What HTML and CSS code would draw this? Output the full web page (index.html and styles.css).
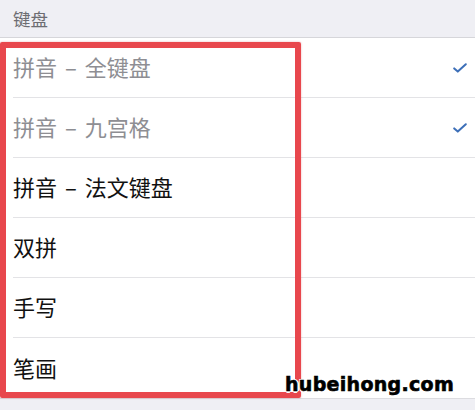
FILE: index.html
```html
<!DOCTYPE html>
<html lang="zh">
<head>
<meta charset="utf-8">
<link rel="stylesheet" href="styles.css">
</head>
<body>
<div class="screen">
  <div class="section-header">键盘</div>
  <ul class="list">
    <li class="row muted"><span class="label">拼音<span class="dash">–</span>全键盘</span>
      <svg class="check" viewBox="0 0 14 10" width="14" height="10"><path d="M1.2 5.4 L4.8 8.6 L12.8 1.2" fill="none" stroke="#3d6fb8" stroke-width="2" stroke-linecap="round" stroke-linejoin="round"/></svg>
    </li>
    <li class="row muted"><span class="label">拼音<span class="dash">–</span>九宫格</span>
      <svg class="check" viewBox="0 0 14 10" width="14" height="10"><path d="M1.2 5.4 L4.8 8.6 L12.8 1.2" fill="none" stroke="#3d6fb8" stroke-width="2" stroke-linecap="round" stroke-linejoin="round"/></svg>
    </li>
    <li class="row"><span class="label">拼音<span class="dash">–</span>法文键盘</span></li>
    <li class="row"><span class="label">双拼</span></li>
    <li class="row"><span class="label">手写</span></li>
    <li class="row last"><span class="label">笔画</span></li>
  </ul>
  <div class="footer"></div>
  <div class="highlight"></div>
  <div class="watermark">hubeihong.com</div>
</div>
</body>
</html>
```
FILE: styles.css
```css
* { box-sizing: border-box; }
html, body { margin: 0; padding: 0; background: #efeff4; }
.screen {
  position: relative;
  width: 475px;
  height: 410px;
  overflow: hidden;
  font-family: "Noto Sans CJK SC", "Noto Sans", sans-serif;
}
.section-header {
  height: 38px;
  padding-left: 13px;
  padding-bottom: 1px;
  display: flex;
  align-items: center;
  font-size: 17.5px;
  color: #6d6d72;
  background: #efeff4;
  border-bottom: 1px solid #d6d6da;
}
.list {
  list-style: none;
  margin: 0;
  padding: 0 0 0 13px;
  background: #fff;
}
.row {
  height: 60px;
  display: flex;
  align-items: center;
  justify-content: space-between;
  padding-right: 8px;
  padding-bottom: 3px;
  border-bottom: 1px solid #e3e3e6;
  font-size: 22px;
  color: #111;
}
.row.last { border-bottom: none; }
.row.muted { color: #8e8e93; }
.label { line-height: 1; }
.dash { margin: 0 8px; }
.check { display: block; margin-top: 3px; }
.footer {
  height: 13px;
  background: #efeff4;
  border-top: 1px solid #dcdce0;
}
.highlight {
  position: absolute;
  left: 0;
  top: 42px;
  width: 301px;
  height: 356px;
  border: 6px solid #e8474d;
  border-radius: 2px;
  box-shadow: 0 0 2px rgba(200, 40, 50, 0.4);
}
.watermark {
  position: absolute;
  left: 285px;
  top: 375px;
  font-family: "DejaVu Sans", sans-serif;
  font-weight: bold;
  font-size: 19px;
  letter-spacing: 0.3px;
  color: #000;
  -webkit-text-stroke: 0.6px #000;
  text-shadow: 1px 1px 0 #fff, -1px -1px 0 #fff, 1px -1px 0 #fff, -1px 1px 0 #fff, 0 2px 0 #fff, 2px 0 0 #fff;
  line-height: 1;
}
```
